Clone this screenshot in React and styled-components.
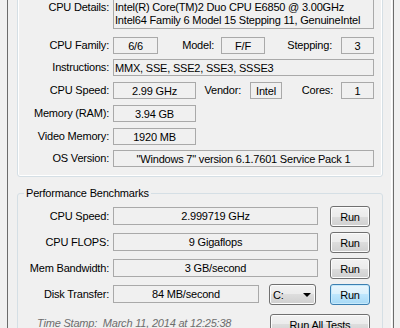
import React from "react";
import styled, { createGlobalStyle } from "styled-components";

const Global = createGlobalStyle`
  html, body { margin: 0; padding: 0; background: #f0f0f0; overflow: hidden; }
  body { font-family: "Liberation Sans", Arial, sans-serif; font-size: 11px; letter-spacing: -0.2px; color: #000; }
`;

const Screen = styled.div`
  width: 400px;
  height: 328px;
  overflow: hidden;
  background: #f0f0f0;
`;

const Frame = styled.div`
  margin-left: 7px;
  width: 387px;
  height: 100%;
  box-sizing: border-box;
  border-left: 1px solid #6b6b6b;
  border-right: 1px solid #6b6b6b;
`;

const Panel = styled.div`
  display: flex;
  flex-direction: column;
  width: 384px;
  height: 100%;
  box-sizing: border-box;
  border-right: 1px solid #ffffff;
  padding-left: 9px;
`;

const Group = styled.div`
  display: flex;
  flex-direction: column;
  width: 366px;
  box-sizing: border-box;
  margin-top: -20px;
  padding: 18px 0 9px 0;
  border: 1px solid #d5dfe5;
  border-radius: 3px;
  box-shadow: inset 0 0 0 1px #ffffff;
`;

const Fieldset = styled.fieldset`
  display: flex;
  flex-direction: column;
  width: 366px;
  min-width: 0;
  box-sizing: border-box;
  margin: 10px 0 0 0;
  padding: 6px 0 0 0;
  border: 1px solid #d5dfe5;
  border-radius: 3px;
`;

const Legend = styled.legend`
  margin-left: 6px;
  padding: 0 2px;
  font-size: 11px;
  line-height: 13px;
`;

const Row = styled.div`
  display: flex;
  align-items: ${(p) => (p.$top ? "flex-start" : "center")};
  margin-top: ${(p) => p.$mt || 0}px;
  height: ${(p) => (p.$h ? `${p.$h}px` : "auto")};
`;

const Label = styled.div`
  width: 91px;
  flex: none;
  text-align: right;
  white-space: nowrap;
  line-height: 13px;
  padding-top: ${(p) => p.$pt || 0}px;
  margin-right: 4px;
`;

const SubLabel = styled.div`
  width: ${(p) => p.$w}px;
  flex: none;
  text-align: right;
  white-space: nowrap;
  line-height: 13px;
  margin-right: ${(p) => p.$gap}px;
`;

const Field = styled.div`
  box-sizing: border-box;
  flex: none;
  width: ${(p) => p.$w}px;
  height: ${(p) => p.$h || 17}px;
  margin-top: ${(p) => p.$mt || 0}px;
  border: 1px solid #a9a9a9;
  padding: ${(p) => (p.$left ? "1px 1px 0 1px" : "1px 0 0 0")};
  text-align: ${(p) => (p.$left ? "left" : "center")};
  line-height: ${(p) => p.$lh || 14}px;
  white-space: nowrap;
  overflow: hidden;
`;

const Button = styled.button`
  box-sizing: border-box;
  flex: none;
  width: ${(p) => p.$w || 40}px;
  height: 21px;
  margin: 0 0 0 ${(p) => p.$ml || 0}px;
  padding: 0;
  font-family: "Liberation Sans", Arial, sans-serif;
  font-size: 11px;
  letter-spacing: -0.2px;
  color: #000;
  border-radius: 3px;
  border: 1px solid ${(p) => (p.$focus ? "#3c7fb1" : "#707070")};
  background: ${(p) =>
    p.$focus
      ? "linear-gradient(#eaf6fd 0%, #d9f0fc 50%, #bee6fd 50%, #a7d9f5 100%)"
      : "linear-gradient(#f2f2f2 0%, #ebebeb 50%, #dddddd 50%, #cfcfcf 100%)"};
  box-shadow: inset 0 0 0 1px ${(p) => (p.$focus ? "#c6e9fb" : "#fcfcfc")};
`;

const Select = styled.div`
  box-sizing: border-box;
  flex: none;
  display: flex;
  align-items: center;
  justify-content: space-between;
  width: 47px;
  height: 21px;
  margin-left: 10px;
  padding: 0 4px 0 3px;
  border-radius: 3px;
  border: 1px solid #707070;
  background: linear-gradient(#f2f2f2 0%, #ebebeb 50%, #dddddd 50%, #cfcfcf 100%);
  box-shadow: inset 0 0 0 1px #fcfcfc;
`;

const Arrow = styled.span`
  width: 0;
  height: 0;
  border-left: 4px solid transparent;
  border-right: 4px solid transparent;
  border-top: 4px solid #000;
  margin-top: 1px;
`;

const Footer = styled.div`
  display: flex;
  align-items: flex-start;
  margin-top: 9px;
  padding-left: 19px;
  padding-right: 12px;
`;

const Stamp = styled.div`
  font-style: italic;
  color: #6d6d6d;
  white-space: pre;
  line-height: 13px;
  padding-top: 3px;
`;

const Spacer = styled.div`
  flex: 1;
`;

function BenchRow({ label, value, mt, children, w = 205 }) {
  return (
    <Row $top $mt={mt} $h={21}>
      <Label $pt={4}>{label}</Label>
      <Field $w={w} $h={18} $mt={1} $lh={15}>{value}</Field>
      {children}
    </Row>
  );
}

export default function App() {
  return (
    <Screen>
      <Global />
      <Frame>
        <Panel>
          <Group>
            <Row $top>
              <Label $pt={2}>CPU Details:</Label>
              <Field $w={261} $h={30} $left $lh={13}>
                Intel(R) Core(TM)2 Duo CPU E6850 @ 3.00GHz
                <br />
                Intel64 Family 6 Model 15 Stepping 11, GenuineIntel
              </Field>
            </Row>
            <Row $mt={8}>
              <Label>CPU Family:</Label>
              <Field $w={45}>6/6</Field>
              <SubLabel $w={56} $gap={7}>Model:</SubLabel>
              <Field $w={44}>F/F</Field>
              <SubLabel $w={67} $gap={9}>Stepping:</SubLabel>
              <Field $w={33}>3</Field>
            </Row>
            <Row $mt={5}>
              <Label>Instructions:</Label>
              <Field $w={261} $left>MMX, SSE, SSE2, SSE3, SSSE3</Field>
            </Row>
            <Row $mt={6}>
              <Label>CPU Speed:</Label>
              <Field $w={83}>2.99 GHz</Field>
              <SubLabel $w={45} $gap={9}>Vendor:</SubLabel>
              <Field $w={32}>Intel</Field>
              <SubLabel $w={51} $gap={8}>Cores:</SubLabel>
              <Field $w={33}>1</Field>
            </Row>
            <Row $mt={6}>
              <Label>Memory (RAM):</Label>
              <Field $w={83}>3.94 GB</Field>
            </Row>
            <Row $mt={6}>
              <Label>Video Memory:</Label>
              <Field $w={83}>1920 MB</Field>
            </Row>
            <Row $mt={5}>
              <Label>OS Version:</Label>
              <Field $w={261}>"Windows 7" version 6.1.7601 Service Pack 1</Field>
            </Row>
          </Group>
          <Fieldset>
            <Legend>Performance Benchmarks</Legend>
            <BenchRow label="CPU Speed:" value="2.999719 GHz">
              <Button $ml={12}>Run</Button>
            </BenchRow>
            <BenchRow label="CPU FLOPS:" value="9 Gigaflops" mt={5}>
              <Button $ml={12}>Run</Button>
            </BenchRow>
            <BenchRow label="Mem Bandwidth:" value="3 GB/second" mt={5}>
              <Button $ml={12}>Run</Button>
            </BenchRow>
            <BenchRow label="Disk Transfer:" value="84 MB/second" mt={5} w={146}>
              <Select>
                <span>C:</span>
                <Arrow />
              </Select>
              <Button $ml={14} $focus>
                Run
              </Button>
            </BenchRow>
            <Footer>
              <Stamp>Time Stamp:  March 11, 2014 at 12:25:38</Stamp>
              <Spacer />
              <Button $w={100}>Run All Tests</Button>
            </Footer>
          </Fieldset>
        </Panel>
      </Frame>
    </Screen>
  );
}
